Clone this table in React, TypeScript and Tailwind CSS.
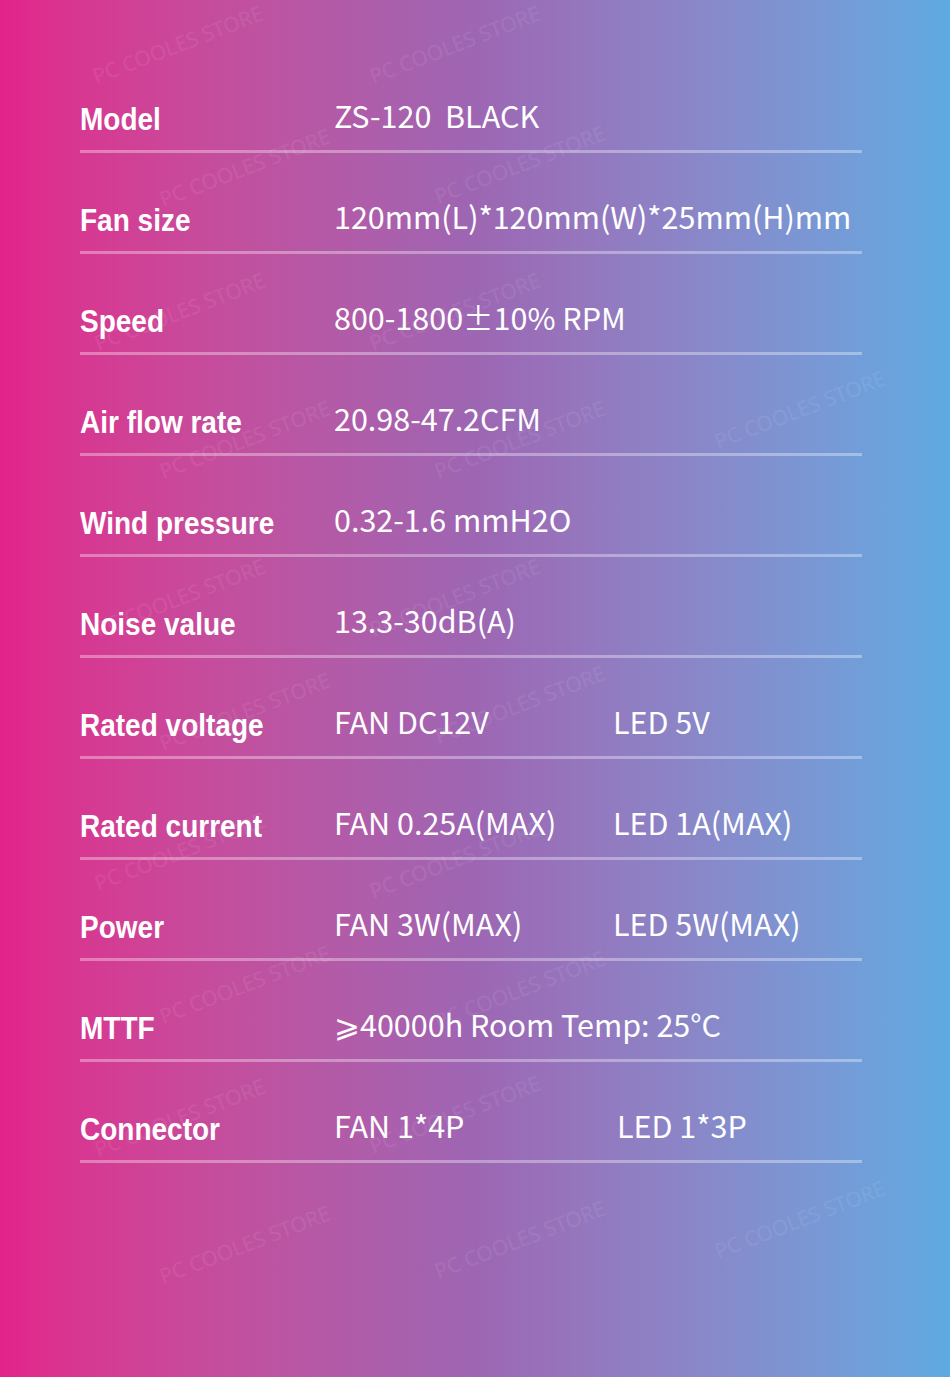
import React from 'react';

type Spec = { label: string; value: string; extra?: string; extraOffset?: string };

const specs: Spec[] = [
  { label: 'Model', value: 'ZS-120  BLACK' },
  { label: 'Fan size', value: '120mm(L)*120mm(W)*25mm(H)mm' },
  { label: 'Speed', value: '800-1800±10% RPM' },
  { label: 'Air flow rate', value: '20.98-47.2CFM' },
  { label: 'Wind pressure', value: '0.32-1.6 mmH2O' },
  { label: 'Noise value', value: '13.3-30dB(A)' },
  { label: 'Rated voltage', value: 'FAN DC12V', extra: 'LED 5V' },
  { label: 'Rated current', value: 'FAN 0.25A(MAX)', extra: 'LED 1A(MAX)' },
  { label: 'Power', value: 'FAN 3W(MAX)', extra: 'LED 5W(MAX)' },
  { label: 'MTTF', value: '⩾40000h Room Temp: 25°C' },
  { label: 'Connector', value: 'FAN 1*4P', extra: 'LED 1*3P', extraOffset: 'pl-[4px]' },
];

// faint store watermark, scattered over the canvas
const marks: [number, number][] = [
  [178, 45], [455, 45], [245, 168], [520, 165],
  [180, 312], [455, 312], [245, 440], [520, 440], [800, 410],
  [180, 598], [455, 598], [245, 712], [520, 705],
  [180, 852], [455, 860], [245, 985], [520, 990],
  [180, 1118], [455, 1115], [245, 1245], [520, 1240], [800, 1220],
];

const App: React.FC = () => {
  return (
    <div className="relative w-[950px] h-[1377px] overflow-hidden bg-gradient-to-r from-[#e2228a] via-[#9d66b3] to-[#5eaae2]">
      {/* Watermarks */}
      {marks.map(([x, y], i) => (
        <div
          key={i}
          className="absolute whitespace-nowrap text-[21px] text-white/[0.07] font-['Noto_Sans',sans-serif] -translate-x-1/2 -translate-y-1/2 -rotate-[21deg]"
          style={{ left: x, top: y }}
        >
          PC COOLES STORE
        </div>
      ))}

      {/* Spec table */}
      <div className="relative ml-[80px] w-[782px] pt-[52px]">
        {specs.map((s) => (
          <div key={s.label} className="flex h-[101px] items-center pt-[30px] border-b-[3px] border-white/35">
            <div className="w-[254px] shrink-0 mt-[8px]">
              <span className="inline-block scale-y-110 text-[28px] font-bold text-white font-['Liberation_Sans',Arial,sans-serif]">
                {s.label}
              </span>
            </div>
            <div className="flex text-[30.5px] font-normal text-white font-['Noto_Sans_CJK_SC','Noto_Sans',sans-serif] whitespace-pre">
              <span className={s.extra ? 'w-[279px]' : ''}>{s.value}</span>
              {s.extra && <span className={s.extraOffset ?? ''}>{s.extra}</span>}
            </div>
          </div>
        ))}
      </div>
    </div>
  );
};

export default App;
